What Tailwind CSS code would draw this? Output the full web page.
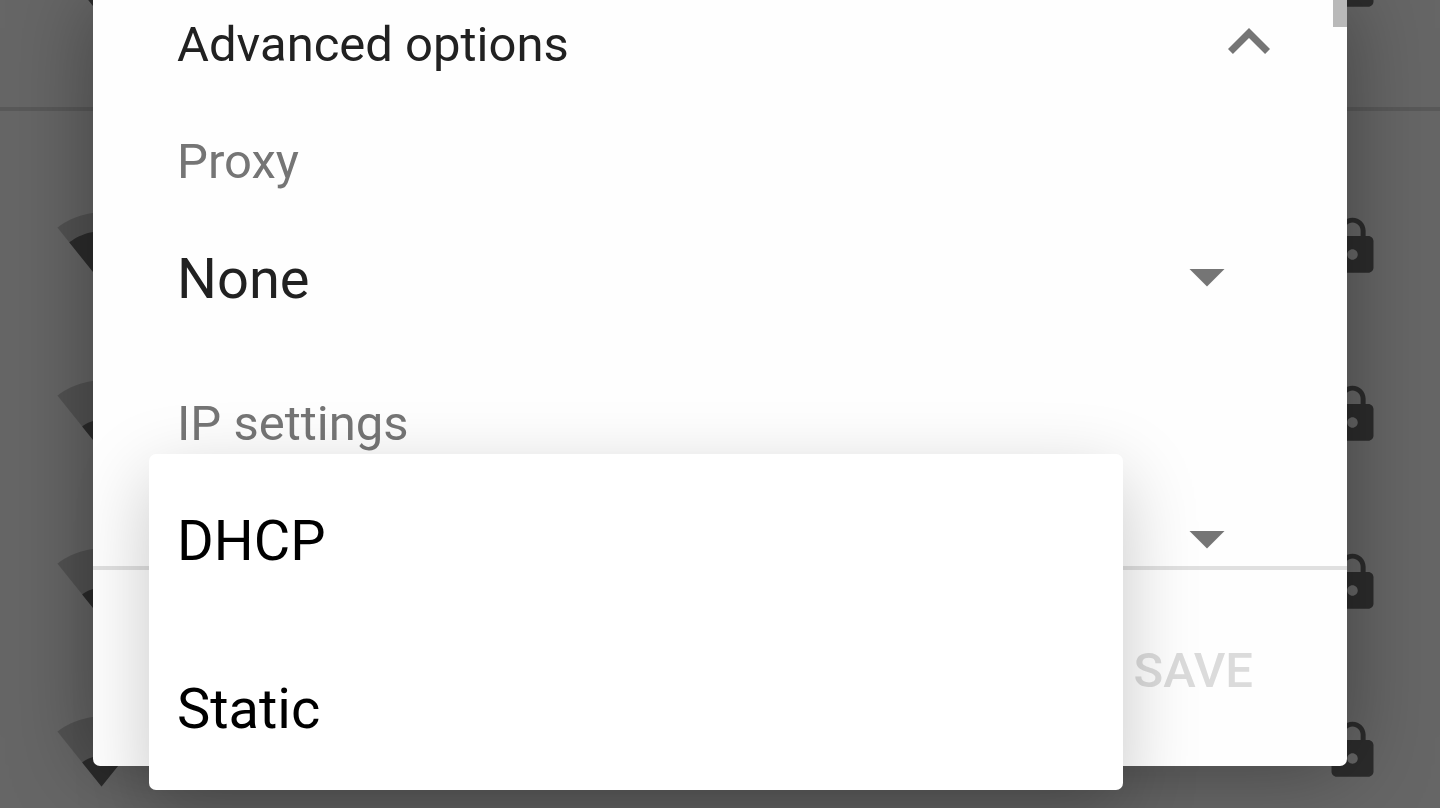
<!DOCTYPE html>
<html lang="en">
<head>
  <meta charset="UTF-8" />
  <meta name="viewport" content="width=device-width, initial-scale=1" />
  <title>Wi-Fi | Advanced options</title>
  <script src="https://cdn.jsdelivr.net/npm/@tailwindcss/browser@4"></script>
</head>
<body class="bg-[#666666] font-['Roboto','Noto_Sans',sans-serif]">

<!-- Shared icons -->
<svg class="hidden">
  <symbol id="wifi-base" viewBox="0 0 24 24">
    <path d="M12.01 21.49L23.64 7c-.45-.34-4.93-4-11.64-4C5.28 3 .81 6.66.36 7l11.63 14.49.01.01.01-.01z" />
  </symbol>
  <symbol id="wifi-3" viewBox="0 0 24 24">
    <path d="M3.53 10.95l8.46 10.54.01.01.01-.01 8.46-10.54C20.04 10.62 16.81 8 12 8c-4.81 0-8.04 2.62-8.47 2.95z" />
  </symbol>
  <symbol id="wifi-1" viewBox="0 0 24 24">
    <path d="M6.9 15.15L12 21.49v.01l.01-.01 5.09-6.34C16.8 14.95 14.9 13.4 12 13.4s-4.800 1.550-5.100 1.750z" />
  </symbol>
  <symbol id="lock" viewBox="0 0 24 24">
    <path d="M18 8h-1V6c0-2.76-2.24-5-5-5S7 3.24 7 6v2H6c-1.1 0-2 .9-2 2v10c0 1.1.9 2 2 2h12c1.1 0 2-.9 2-2V10c0-1.1-.9-2-2-2zm-6 9c-1.1 0-2-.9-2-2s.9-2 2-2 2 .9 2 2-.9 2-2 2zm3.100-9H8.900V6c0-1.710 1.390-3.100 3.100-3.100 1.710 0 3.100 1.390 3.100 3.100v2z" />
  </symbol>
  <symbol id="arrow-down" viewBox="0 0 24 24">
    <path d="M7 10l5 5 5-5z" />
  </symbol>
  <symbol id="chevron-up" viewBox="0 0 24 24">
    <path d="M12 8l-6 6 1.410 1.410L12 10.830l4.590 4.580L18 14z" />
  </symbol>
</svg>

<div class="relative h-screen overflow-hidden">

  <!-- Network list, scrolled behind the dialog -->
  <div class="-mt-[104px]" aria-hidden="true">
    <div class="flex h-42 items-center justify-between px-14">
      <svg class="size-[91px]"><use href="#wifi-base" class="fill-black/18" /><use href="#wifi-3" class="fill-[#2c2c2c]" /></svg>
      <svg class="size-[63px] fill-[#2c2c2c]"><use href="#lock" /></svg>
    </div>

    <div class="mt-[43px] mb-[51px] h-1 bg-[#595959]"></div>

    <div class="flex h-42 items-center justify-between px-14">
      <svg class="size-[91px]"><use href="#wifi-base" class="fill-black/18" /><use href="#wifi-3" class="fill-[#2c2c2c]" /></svg>
      <svg class="size-[63px] fill-[#2c2c2c]"><use href="#lock" /></svg>
    </div>
    <div class="flex h-42 items-center justify-between px-14">
      <svg class="size-[91px]"><use href="#wifi-base" class="fill-black/18" /><use href="#wifi-1" class="fill-[#2c2c2c]" /></svg>
      <svg class="size-[63px] fill-[#2c2c2c]"><use href="#lock" /></svg>
    </div>
    <div class="flex h-42 items-center justify-between px-14">
      <svg class="size-[91px]"><use href="#wifi-base" class="fill-black/18" /><use href="#wifi-1" class="fill-[#2c2c2c]" /></svg>
      <svg class="size-[63px] fill-[#2c2c2c]"><use href="#lock" /></svg>
    </div>
    <div class="flex h-42 items-center justify-between px-14">
      <svg class="size-[91px]"><use href="#wifi-base" class="fill-black/18" /><use href="#wifi-1" class="fill-[#2c2c2c]" /></svg>
      <svg class="size-[63px] fill-[#2c2c2c]"><use href="#lock" /></svg>
    </div>
  </div>

  <!-- Dialog -->
  <form class="absolute inset-x-[93px] top-0 bottom-[42px] flex flex-col rounded-b-[7px] bg-[#fefefe] shadow-[0_0_84px_rgba(0,0,0,0.36)]">
    <div class="min-h-0 flex-1 overflow-hidden pl-21">
      <button type="button" class="flex h-21 w-full items-center justify-between pr-14 text-left" aria-expanded="true">
        <span class="pt-1.5 text-[49px] leading-[58px] text-[#212121]">Advanced options</span>
        <svg class="size-21 fill-[#757575]"><use href="#chevron-up" /></svg>
      </button>

      <div class="mt-[49px]">
        <label for="proxy" class="block text-[49px] leading-[58px] text-[#757575]">Proxy</label>
        <div class="mt-[43px] mr-[98px] grid items-center">
          <select id="proxy" class="col-start-1 row-start-1 h-21 w-full appearance-none pt-1.5 text-[56px] leading-[66px] text-[#212121]">
            <option>None</option>
            <option>Manual</option>
            <option>Proxy Auto-Config</option>
          </select>
          <svg class="pointer-events-none col-start-1 row-start-1 size-21 justify-self-end fill-[#757575]"><use href="#arrow-down" /></svg>
        </div>
      </div>

      <div class="mt-[77px]">
        <label for="ip-settings" class="block text-[49px] leading-[58px] text-[#757575]">IP settings</label>
        <div class="mt-[43px] mr-[98px] grid items-center">
          <select id="ip-settings" class="col-start-1 row-start-1 h-21 w-full appearance-none pt-1.5 text-[56px] leading-[66px] text-[#212121]">
            <option>DHCP</option>
            <option>Static</option>
          </select>
          <svg class="pointer-events-none col-start-1 row-start-1 size-21 justify-self-end fill-[#757575]"><use href="#arrow-down" /></svg>
        </div>
      </div>
    </div>

    <!-- Scroll thumb -->
    <div class="absolute top-0 right-0 h-[27px] w-3.5 bg-[#b9b9b9]"></div>

    <div class="flex h-50 items-center justify-end border-t-4 border-[#e0e0e0] pt-1.5 pr-[94px]">
      <button type="submit" class="text-[49px] leading-[58px] font-medium text-[#dbdbdb]" disabled>SAVE</button>
    </div>

    <!-- Open IP settings menu -->
    <div role="listbox" aria-label="IP settings" class="absolute right-56 -bottom-6 left-14 flex flex-col rounded-[7px] bg-white shadow-[0_24px_76px_rgba(0,0,0,0.22)]">
      <button type="button" role="option" aria-selected="true" class="h-42 px-7 pt-1.5 text-left text-[56px] leading-[66px] text-black">DHCP</button>
      <button type="button" role="option" aria-selected="false" class="h-42 px-7 pt-1.5 text-left text-[56px] leading-[66px] text-black">Static</button>
    </div>
  </form>
</div>

</body>
</html>
